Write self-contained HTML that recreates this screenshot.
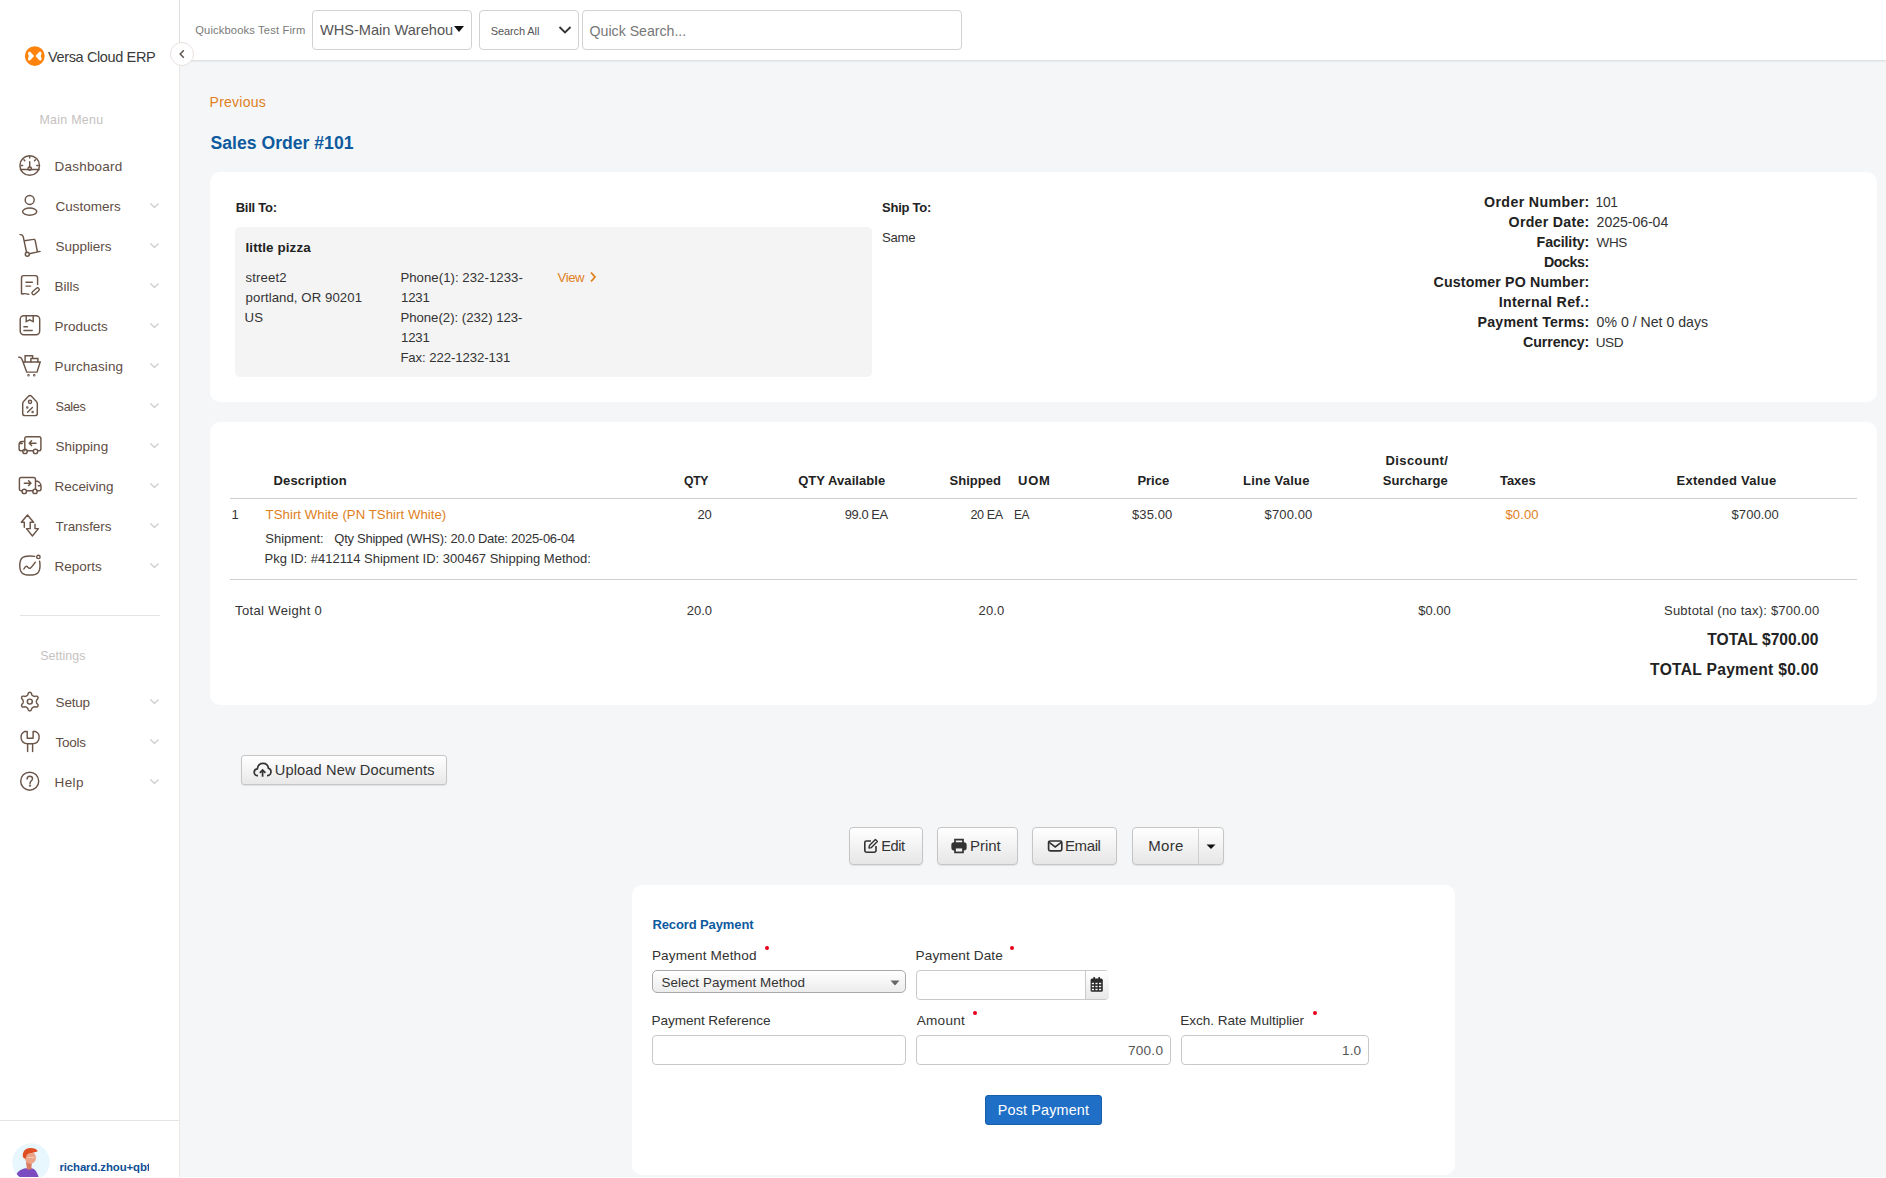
<!DOCTYPE html>
<html><head><meta charset="utf-8"><title>Sales Order #101</title>
<style>
html,body{margin:0;padding:0;width:1886px;height:1178px;overflow:hidden;background:#f5f6f8;}
body{position:relative;font-family:"Liberation Sans", sans-serif;}
.t{position:absolute;white-space:nowrap;}
.r{position:absolute;}
</style></head><body>
<div class="r" style="left:0px;top:0px;width:1886px;height:1178px;background:#f5f6f8;"></div>
<div class="r" style="left:0px;top:0px;width:179px;height:1178px;background:#fff;"></div>
<div class="r" style="left:179px;top:0px;width:1px;height:1178px;background:#ebe7e4;"></div>
<div class="r" style="left:180px;top:0px;width:1706px;height:60px;background:#fff;box-shadow:0 1px 2px rgba(0,0,0,0.12);"></div>
<svg class="r" style="left:24px;top:45.8px" width="22" height="21" viewBox="0 0 22 21">
<circle cx="10.8" cy="10.1" r="9.9" fill="#ff820a"/>
<path d="M4 7.3 C4 5.9 5.5 5.2 6.5 6.1 L10.1 10.1 L6.5 14.1 C5.5 15 4 14.3 4 12.9 C4 12 4.7 11.4 4.7 10.1 C4.7 8.8 4 8.2 4 7.3 Z" fill="#fff"/>
<path d="M17.6 7.3 C17.6 5.9 16.1 5.2 15.1 6.1 L11.5 10.1 L15.1 14.1 C16.1 15 17.6 14.3 17.6 12.9 C17.6 12 16.9 11.4 16.9 10.1 C16.9 8.8 17.6 8.2 17.6 7.3 Z" fill="#fff"/>
</svg>
<div class="t" style="left:48.00px;top:48px;font-size:14.5px;line-height:18px;color:#3a3a3a;letter-spacing:-0.369px;">Versa Cloud ERP</div>
<div class="r" style="left:170px;top:42px;width:22px;height:22px;border:1px solid #e8e1dd;border-radius:50%;background:#fff;"></div>
<svg class="r" style="left:176px;top:48px" width="12" height="12" viewBox="0 0 12 12"><path d="M7.8 2.2 L4.2 6 L7.8 9.8" fill="none" stroke="#5b504a" stroke-width="1.4"/></svg>
<div class="t" style="left:39.50px;top:112px;font-size:12.4px;line-height:16px;color:#c6c2bf;letter-spacing:0.287px;">Main Menu</div>
<svg class="r" style="left:18px;top:154px" width="24" height="24" viewBox="0 0 24 24" fill="none" stroke="#6b5548" stroke-width="1.45" stroke-linecap="round"><circle cx="11.7" cy="11.5" r="9.8"/><path d="M2.4 15.5 H21"/><circle cx="11.7" cy="14.6" r="1.7"/><path d="M11.7 12.9 V7.6 M11.7 2.6 V4 M3.2 11.5 H4.6 M20.2 11.5 H18.8 M5.9 5.8 L6.8 6.7 M17.5 5.8 L16.6 6.7"/></svg>
<div class="t" style="left:54.60px;top:158px;font-size:13.5px;line-height:17px;color:#5e4d44;letter-spacing:0.196px;">Dashboard</div>
<svg class="r" style="left:18px;top:194px" width="24" height="24" viewBox="0 0 24 24" fill="none" stroke="#6b5548" stroke-width="1.45" stroke-linecap="round"><circle cx="11.7" cy="5.9" r="4.5"/><ellipse cx="11.7" cy="17.6" rx="7.1" ry="3.6"/></svg>
<div class="t" style="left:55.60px;top:198px;font-size:13.5px;line-height:17px;color:#5e4d44;letter-spacing:-0.002px;">Customers</div>
<svg class="r" style="left:148px;top:200px" width="14" height="10" viewBox="0 0 14 10"><path d="M2.5 3.5 L6.5 7.5 L10.5 3.5" fill="none" stroke="#ccc8c5" stroke-width="1.1"/></svg>
<svg class="r" style="left:18px;top:234px" width="24" height="24" viewBox="0 0 24 24" fill="none" stroke="#6b5548" stroke-width="1.45" stroke-linecap="round"><path d="M2 0.6 C3.6 0.6 4.8 1.2 5.2 2.6 L8.6 18.6 M6.5 6.7 L15.4 5.4 C16.4 5.2 17 5.8 17.2 6.6 L19.4 17.6 M11.4 19.8 L22 17.4"/><circle cx="9.3" cy="20.3" r="2"/></svg>
<div class="t" style="left:55.60px;top:238px;font-size:13.5px;line-height:17px;color:#5e4d44;letter-spacing:-0.054px;">Suppliers</div>
<svg class="r" style="left:148px;top:240px" width="14" height="10" viewBox="0 0 14 10"><path d="M2.5 3.5 L6.5 7.5 L10.5 3.5" fill="none" stroke="#ccc8c5" stroke-width="1.1"/></svg>
<svg class="r" style="left:18px;top:274px" width="24" height="24" viewBox="0 0 24 24" fill="none" stroke="#6b5548" stroke-width="1.45" stroke-linecap="round"><path d="M19.6 10.6 V4 C19.6 2.6 18.8 1.6 17.4 1.6 H5.6 C4.2 1.6 3.5 2.6 3.5 4 V19.6 C4.4 20.4 5.4 19.6 6.6 19.6 C8.2 19.6 9.2 20.4 10.8 20.2"/><path d="M8 8.3 H14.4 M8 12.1 H12.6"/><rect x="13.3" y="15.6" width="8.6" height="3.3" rx="1.65" transform="rotate(-42 17.6 17.25)"/></svg>
<div class="t" style="left:54.60px;top:278px;font-size:13.5px;line-height:17px;color:#5e4d44;">Bills</div>
<svg class="r" style="left:148px;top:280px" width="14" height="10" viewBox="0 0 14 10"><path d="M2.5 3.5 L6.5 7.5 L10.5 3.5" fill="none" stroke="#ccc8c5" stroke-width="1.1"/></svg>
<svg class="r" style="left:18px;top:314px" width="24" height="24" viewBox="0 0 24 24" fill="none" stroke="#6b5548" stroke-width="1.45" stroke-linecap="round"><rect x="2.2" y="1.7" width="19.5" height="19" rx="3.6"/><path d="M8.2 1.7 V7.6 L11.7 5.8 L15.2 7.6 V1.7"/><path d="M5.9 12.8 H9.4 M5.9 16.4 H14.2"/></svg>
<div class="t" style="left:54.60px;top:318px;font-size:13.5px;line-height:17px;color:#5e4d44;">Products</div>
<svg class="r" style="left:148px;top:320px" width="14" height="10" viewBox="0 0 14 10"><path d="M2.5 3.5 L6.5 7.5 L10.5 3.5" fill="none" stroke="#ccc8c5" stroke-width="1.1"/></svg>
<svg class="r" style="left:18px;top:354px" width="24" height="24" viewBox="0 0 24 24" fill="none" stroke="#6b5548" stroke-width="1.45" stroke-linecap="round"><path d="M0.8 3.2 C2 3 3.2 3.6 3.8 5 L5 7.9 H22.2 L19 18.1 H8.7 L5 7.9"/><path d="M7.1 7.9 V1.7 H14.6 V4.4 H19.9 V7.9 M14.6 4.4 H12.9 V7.9"/><circle cx="10.5" cy="21.3" r=".45" stroke-width="1.6"/><circle cx="16.2" cy="21.3" r=".45" stroke-width="1.6"/></svg>
<div class="t" style="left:54.60px;top:358px;font-size:13.5px;line-height:17px;color:#5e4d44;letter-spacing:0.097px;">Purchasing</div>
<svg class="r" style="left:148px;top:360px" width="14" height="10" viewBox="0 0 14 10"><path d="M2.5 3.5 L6.5 7.5 L10.5 3.5" fill="none" stroke="#ccc8c5" stroke-width="1.1"/></svg>
<svg class="r" style="left:18px;top:394px" width="24" height="24" viewBox="0 0 24 24" fill="none" stroke="#6b5548" stroke-width="1.45" stroke-linecap="round"><path d="M10.5 2.2 C11.3 1.3 12.7 1.3 13.5 2.2 L18.4 7.4 C19 8 19.3 8.7 19.3 9.6 V19.4 C19.3 20.8 18.4 21.6 17 21.6 H7 C5.6 21.6 4.7 20.8 4.7 19.4 V9.6 C4.7 8.7 5 8 5.6 7.4 Z"/><circle cx="12" cy="7.8" r="1.6"/><path d="M14.4 13.4 L9.6 18.2"/><circle cx="9.3" cy="13.4" r=".5" stroke-width="1.5"/><circle cx="14.6" cy="18" r=".5" stroke-width="1.5"/></svg>
<div class="t" style="left:55.60px;top:399px;font-size:12.7px;line-height:16px;color:#5e4d44;letter-spacing:-0.400px;">Sales</div>
<svg class="r" style="left:148px;top:400px" width="14" height="10" viewBox="0 0 14 10"><path d="M2.5 3.5 L6.5 7.5 L10.5 3.5" fill="none" stroke="#ccc8c5" stroke-width="1.1"/></svg>
<svg class="r" style="left:18px;top:434px" width="24" height="24" viewBox="0 0 24 24" fill="none" stroke="#6b5548" stroke-width="1.45" stroke-linecap="round"><path d="M6.8 16.8 V4.6 C6.8 3.4 7.5 2.8 8.7 2.8 H21 C22.2 2.8 22.9 3.4 22.9 4.6 V15 C22.9 16.2 22.2 16.8 21 16.8 H19.7 M15.3 16.8 H9.2 M6.8 7.4 H4.2 C2.4 7.4 1.1 8.8 1.1 10.6 V15 C1.1 16.2 1.8 16.8 3 16.8 H4.8 M1.3 9.4 H4.2"/><circle cx="7" cy="17.4" r="2.2"/><circle cx="17.5" cy="17.4" r="2.2"/><path d="M11.2 9.2 H18 M11.2 9.2 L13.6 6.8 M11.2 9.2 L13.6 11.6"/></svg>
<div class="t" style="left:55.60px;top:438px;font-size:13.5px;line-height:17px;color:#5e4d44;">Shipping</div>
<svg class="r" style="left:148px;top:440px" width="14" height="10" viewBox="0 0 14 10"><path d="M2.5 3.5 L6.5 7.5 L10.5 3.5" fill="none" stroke="#ccc8c5" stroke-width="1.1"/></svg>
<svg class="r" style="left:18px;top:474px" width="24" height="24" viewBox="0 0 24 24" fill="none" stroke="#6b5548" stroke-width="1.45" stroke-linecap="round"><path d="M1.4 15 V5.2 C1.4 4 2.1 3.4 3.3 3.4 H15.6 C16.8 3.4 17.5 4 17.5 5.2 V15 M8.5 16.8 H15 M17.5 7.3 H19.4 C21.4 7.8 23 10.2 23 12.4 V15 C23 16.2 22.4 16.8 21.2 16.8 H19.2 M20.4 11.8 H23 M4.1 16.8 H3.2 C2 16.8 1.4 16.2 1.4 15"/><circle cx="6.3" cy="17.4" r="2.2"/><circle cx="17" cy="17.4" r="2.2"/><path d="M6.3 9.2 H13 M13 9.2 L10.6 6.8 M13 9.2 L10.6 11.6"/></svg>
<div class="t" style="left:54.60px;top:478px;font-size:13.5px;line-height:17px;color:#5e4d44;letter-spacing:-0.059px;">Receiving</div>
<svg class="r" style="left:148px;top:480px" width="14" height="10" viewBox="0 0 14 10"><path d="M2.5 3.5 L6.5 7.5 L10.5 3.5" fill="none" stroke="#ccc8c5" stroke-width="1.1"/></svg>
<svg class="r" style="left:18px;top:514px" width="24" height="24" viewBox="0 0 24 24" fill="none" stroke="#6b5548" stroke-width="1.45" stroke-linecap="round"><path d="M6.3 13.2 V8.3 H3.3 L9.5 1 L15.6 8.3 H12.2 V14.6" stroke-linejoin="round"/><path d="M17 10.2 V14.6 H20.4 L14.4 22 L8.5 14.6 H12.2" stroke-linejoin="round"/></svg>
<div class="t" style="left:55.60px;top:518px;font-size:13.5px;line-height:17px;color:#5e4d44;letter-spacing:-0.083px;">Transfers</div>
<svg class="r" style="left:148px;top:520px" width="14" height="10" viewBox="0 0 14 10"><path d="M2.5 3.5 L6.5 7.5 L10.5 3.5" fill="none" stroke="#ccc8c5" stroke-width="1.1"/></svg>
<svg class="r" style="left:18px;top:554px" width="24" height="24" viewBox="0 0 24 24" fill="none" stroke="#6b5548" stroke-width="1.45" stroke-linecap="round"><path d="M16.6 2.4 C15.2 2.1 13.6 2 11.9 2 C4.4 2 1.8 4.4 1.8 11.5 C1.8 18.6 4.4 21 11.9 21 C19.4 21 22 18.6 22 11.5 C22 9.8 21.9 8.4 21.6 7.2"/><circle cx="20.4" cy="2.9" r="1.7"/><path d="M5.9 15 C7.4 11.8 8.6 11.6 10 13.4 C11.4 15.2 12.6 15 17.3 8.2"/></svg>
<div class="t" style="left:54.60px;top:558px;font-size:13.5px;line-height:17px;color:#5e4d44;">Reports</div>
<svg class="r" style="left:148px;top:560px" width="14" height="10" viewBox="0 0 14 10"><path d="M2.5 3.5 L6.5 7.5 L10.5 3.5" fill="none" stroke="#ccc8c5" stroke-width="1.1"/></svg>
<div class="r" style="left:20px;top:615px;width:140px;height:1px;background:#e6e2df;"></div>
<div class="t" style="left:40.20px;top:648px;font-size:12.4px;line-height:16px;color:#c6c2bf;letter-spacing:0.061px;">Settings</div>
<svg class="r" style="left:18px;top:690px" width="24" height="24" viewBox="0 0 24 24" fill="none" stroke="#6b5548" stroke-width="1.45" stroke-linecap="round"><path d="M18.40 11.60 L18.41 11.89 L18.44 12.18 L18.49 12.48 L18.56 12.79 L18.66 13.12 L18.85 13.49 L19.50 14.03 L19.82 14.52 L19.99 14.99 L20.06 15.45 L20.01 15.87 L19.85 16.25 L19.60 16.57 L19.26 16.82 L18.84 17.00 L18.34 17.08 L17.75 17.06 L16.96 16.76 L16.55 16.78 L16.22 16.86 L15.91 16.96 L15.62 17.06 L15.36 17.18 L15.10 17.32 L14.86 17.47 L14.62 17.64 L14.38 17.84 L14.15 18.05 L13.91 18.30 L13.69 18.65 L13.55 19.49 L13.28 20.00 L12.96 20.39 L12.59 20.67 L12.20 20.84 L11.80 20.90 L11.40 20.84 L11.01 20.67 L10.64 20.39 L10.32 20.00 L10.05 19.49 L9.91 18.65 L9.69 18.30 L9.45 18.05 L9.22 17.84 L8.98 17.64 L8.74 17.47 L8.50 17.32 L8.24 17.18 L7.98 17.06 L7.69 16.96 L7.38 16.86 L7.05 16.78 L6.64 16.76 L5.85 17.06 L5.26 17.08 L4.76 17.00 L4.34 16.82 L4.00 16.57 L3.75 16.25 L3.59 15.87 L3.54 15.45 L3.61 14.99 L3.78 14.52 L4.10 14.03 L4.75 13.49 L4.94 13.12 L5.04 12.79 L5.11 12.48 L5.16 12.18 L5.19 11.89 L5.20 11.60 L5.19 11.31 L5.16 11.02 L5.11 10.72 L5.04 10.41 L4.94 10.08 L4.75 9.71 L4.10 9.17 L3.78 8.68 L3.61 8.21 L3.54 7.75 L3.59 7.33 L3.75 6.95 L4.00 6.63 L4.34 6.38 L4.76 6.20 L5.26 6.12 L5.85 6.14 L6.64 6.44 L7.05 6.42 L7.38 6.34 L7.69 6.24 L7.98 6.14 L8.24 6.02 L8.50 5.88 L8.74 5.73 L8.98 5.56 L9.22 5.36 L9.45 5.15 L9.69 4.90 L9.91 4.55 L10.05 3.71 L10.32 3.20 L10.64 2.81 L11.01 2.53 L11.40 2.36 L11.80 2.30 L12.20 2.36 L12.59 2.53 L12.96 2.81 L13.28 3.20 L13.55 3.71 L13.69 4.55 L13.91 4.90 L14.15 5.15 L14.38 5.36 L14.62 5.56 L14.86 5.73 L15.10 5.88 L15.36 6.02 L15.62 6.14 L15.91 6.24 L16.22 6.34 L16.55 6.42 L16.96 6.44 L17.75 6.14 L18.34 6.12 L18.84 6.20 L19.26 6.38 L19.60 6.63 L19.85 6.95 L20.01 7.33 L20.06 7.75 L19.99 8.21 L19.82 8.68 L19.50 9.17 L18.85 9.71 L18.66 10.08 L18.56 10.41 L18.49 10.72 L18.44 11.02 L18.41 11.31 L18.40 11.60Z" stroke-linejoin="round"/><circle cx="11.8" cy="11.6" r="2.5"/></svg>
<div class="t" style="left:55.60px;top:694px;font-size:13.5px;line-height:17px;color:#5e4d44;letter-spacing:-0.193px;">Setup</div>
<svg class="r" style="left:148px;top:696px" width="14" height="10" viewBox="0 0 14 10"><path d="M2.5 3.5 L6.5 7.5 L10.5 3.5" fill="none" stroke="#ccc8c5" stroke-width="1.1"/></svg>
<svg class="r" style="left:18px;top:730px" width="24" height="24" viewBox="0 0 24 24" fill="none" stroke="#6b5548" stroke-width="1.45" stroke-linecap="round"><path d="M9.2 1.4 V8.2 H15.1 V1.4 M9.2 1.4 H6.8 C4 2.8 2.6 5.6 3.2 8.6 C3.8 11.6 6.4 13.6 9.6 13.8 V21.6 M15.1 1.4 H17.4 C20.2 2.8 21.6 5.6 21 8.6 C20.4 11.6 17.8 13.6 14.6 13.8 V21.6 M9.6 13.8 H14.6" stroke-linejoin="round"/></svg>
<div class="t" style="left:55.60px;top:734px;font-size:13.5px;line-height:17px;color:#5e4d44;letter-spacing:-0.291px;">Tools</div>
<svg class="r" style="left:148px;top:736px" width="14" height="10" viewBox="0 0 14 10"><path d="M2.5 3.5 L6.5 7.5 L10.5 3.5" fill="none" stroke="#ccc8c5" stroke-width="1.1"/></svg>
<svg class="r" style="left:18px;top:770px" width="24" height="24" viewBox="0 0 24 24" fill="none" stroke="#6b5548" stroke-width="1.45" stroke-linecap="round"><circle cx="11.7" cy="11.2" r="9"/><path d="M9.1 9 C9.1 7.3 10.2 6.2 11.8 6.2 C13.4 6.2 14.5 7.3 14.5 8.7 C14.5 10.7 12 10.9 12 13.4"/><circle cx="12" cy="15.6" r=".45" stroke-width="1.5"/></svg>
<div class="t" style="left:54.60px;top:774px;font-size:13.5px;line-height:17px;color:#5e4d44;letter-spacing:0.348px;">Help</div>
<svg class="r" style="left:148px;top:776px" width="14" height="10" viewBox="0 0 14 10"><path d="M2.5 3.5 L6.5 7.5 L10.5 3.5" fill="none" stroke="#ccc8c5" stroke-width="1.1"/></svg>
<div class="r" style="left:0px;top:1120px;width:179px;height:1px;background:#e6e2df;"></div>
<svg class="r" style="left:12px;top:1143px" width="38" height="35" viewBox="0 0 38 35">
<defs><clipPath id="av"><circle cx="19" cy="19" r="18.8"/></clipPath></defs>
<g clip-path="url(#av)">
<circle cx="19" cy="19" r="19" fill="#e8f7fd"/>
<path d="M3 36 C4 29 8.5 25.8 14 25.2 L20 25.2 C23 26 25.5 29 27 36 Z" fill="#7b4cc0"/>
<path d="M14 19 L19.8 19 L19.4 26.4 L15 26.4 Z" fill="#d97c62"/>
<ellipse cx="18.4" cy="14.8" rx="5.6" ry="6.1" fill="#eca386"/>
<path d="M15.5 14.4 H22.5" stroke="#f6d9cc" stroke-width="0.8"/>
<path d="M10.8 13.6 C10.4 8.4 13 5 18 4.9 C22 4.8 25 6 25.8 8.2 C23.2 9.4 20 9.8 17.2 10.2 C15.4 10.6 14.4 12.2 13.8 15.2 L12 15.4 Z" fill="#dd4e22"/>
</g></svg>
<div class="t" style="left:59.40px;top:1160px;font-size:11.4px;line-height:14px;color:#0f4f96;font-weight:700;letter-spacing:-0.101px;width:89.8px;overflow:hidden;">richard.zhou+qbt</div>
<div class="t" style="left:195.20px;top:23px;font-size:11.2px;line-height:14px;color:#7a7a7a;letter-spacing:0.141px;">Quickbooks Test Firm</div>
<div class="r" style="left:312px;top:10px;width:160px;height:40px;background:#fff;border:1px solid #d2d2d2;border-radius:4px;box-sizing:border-box;"></div>
<div class="t" style="left:319.90px;top:21px;font-size:14.6px;line-height:18px;color:#555;width:133.5px;overflow:hidden;">WHS-Main Warehouse</div>
<svg class="r" style="left:453px;top:25px" width="12" height="8" viewBox="0 0 12 8"><path d="M1 1 H11 L6 7 Z" fill="#111"/></svg>
<div class="r" style="left:479px;top:10px;width:100px;height:40px;background:#fff;border:1px solid #d2d2d2;border-radius:4px;box-sizing:border-box;"></div>
<div class="t" style="left:490.70px;top:24px;font-size:11px;line-height:14px;color:#555;letter-spacing:-0.099px;">Search All</div>
<svg class="r" style="left:558px;top:24px" width="14" height="12" viewBox="0 0 14 12"><path d="M1.5 3 L7 8.5 L12.5 3" fill="none" stroke="#333" stroke-width="1.8"/></svg>
<div class="r" style="left:582px;top:10px;width:380px;height:40px;background:#fff;border:1px solid #d2d2d2;border-radius:4px;box-sizing:border-box;"></div>
<div class="t" style="left:589.60px;top:22px;font-size:14.2px;line-height:18px;color:#777;letter-spacing:-0.025px;">Quick Search...</div>
<div class="t" style="left:209.60px;top:93px;font-size:14px;line-height:18px;color:#e0801b;letter-spacing:0.247px;">Previous</div>
<div class="t" style="left:210.60px;top:132px;font-size:17.6px;line-height:22px;color:#0d5a9e;font-weight:700;letter-spacing:0.005px;">Sales Order #101</div>
<div class="r" style="left:210px;top:172px;width:1667px;height:230px;background:#fff;border-radius:10px;"></div>
<div class="t" style="left:235.70px;top:200px;font-size:13px;line-height:16px;color:#222;font-weight:700;letter-spacing:-0.250px;">Bill To:</div>
<div class="r" style="left:235px;top:227px;width:637px;height:150px;background:#f4f4f4;border-radius:5px;"></div>
<div class="t" style="left:245.50px;top:239px;font-size:13.4px;line-height:17px;color:#222;font-weight:700;letter-spacing:0.106px;">little pizza</div>
<div class="t" style="left:245.60px;top:270px;font-size:13.2px;line-height:16px;color:#333;letter-spacing:0.120px;">street2</div>
<div class="t" style="left:245.60px;top:290px;font-size:13.2px;line-height:16px;color:#333;letter-spacing:0.078px;">portland, OR 90201</div>
<div class="t" style="left:244.60px;top:310px;font-size:13.2px;line-height:16px;color:#333;letter-spacing:0.120px;">US</div>
<div class="t" style="left:400.40px;top:270px;font-size:13.2px;line-height:16px;color:#333;letter-spacing:0.038px;">Phone(1): 232-1233-</div>
<div class="t" style="left:401.00px;top:290px;font-size:13.2px;line-height:16px;color:#333;letter-spacing:-0.201px;">1231</div>
<div class="t" style="left:400.40px;top:310px;font-size:13.2px;line-height:16px;color:#333;letter-spacing:-0.017px;">Phone(2): (232) 123-</div>
<div class="t" style="left:401.00px;top:330px;font-size:13.2px;line-height:16px;color:#333;letter-spacing:-0.201px;">1231</div>
<div class="t" style="left:400.40px;top:350px;font-size:13.2px;line-height:16px;color:#333;letter-spacing:-0.100px;">Fax: 222-1232-131</div>
<div class="t" style="left:557.50px;top:270px;font-size:13.2px;line-height:16px;color:#e0801b;letter-spacing:-0.400px;">View</div>
<svg class="r" style="left:588px;top:270px" width="10" height="14" viewBox="0 0 10 14"><path d="M3 2.5 L7 7 L3 11.5" fill="none" stroke="#e0801b" stroke-width="1.8"/></svg>
<div class="t" style="left:882.10px;top:200px;font-size:13px;line-height:16px;color:#222;font-weight:700;letter-spacing:-0.256px;">Ship To:</div>
<div class="t" style="left:882.00px;top:230px;font-size:13.2px;line-height:16px;color:#333;letter-spacing:-0.305px;">Same</div>
<div class="t" style="left:1484.10px;top:193px;font-size:14.2px;line-height:18px;color:#222;font-weight:700;letter-spacing:0.360px;">Order Number:</div>
<div class="t" style="left:1595.62px;top:194px;font-size:13.8px;line-height:17px;color:#333;letter-spacing:-0.400px;">101</div>
<div class="t" style="left:1508.60px;top:213px;font-size:14.2px;line-height:18px;color:#222;font-weight:700;letter-spacing:0.267px;">Order Date:</div>
<div class="t" style="left:1596.60px;top:213px;font-size:14.1px;line-height:18px;color:#333;letter-spacing:-0.051px;">2025-06-04</div>
<div class="t" style="left:1536.60px;top:233px;font-size:14.2px;line-height:18px;color:#222;font-weight:700;letter-spacing:-0.111px;">Facility:</div>
<div class="t" style="left:1596.60px;top:234px;font-size:13.5px;line-height:17px;color:#333;letter-spacing:-0.400px;">WHS</div>
<div class="t" style="left:1544.00px;top:253px;font-size:14.2px;line-height:18px;color:#222;font-weight:700;letter-spacing:-0.397px;">Docks:</div>
<div class="t" style="left:1433.50px;top:273px;font-size:14.2px;line-height:18px;color:#222;font-weight:700;letter-spacing:0.161px;">Customer PO Number:</div>
<div class="t" style="left:1498.70px;top:293px;font-size:14.2px;line-height:18px;color:#222;font-weight:700;letter-spacing:0.301px;">Internal Ref.:</div>
<div class="t" style="left:1477.60px;top:313px;font-size:14.2px;line-height:18px;color:#222;font-weight:700;letter-spacing:0.184px;">Payment Terms:</div>
<div class="t" style="left:1596.60px;top:313px;font-size:14.1px;line-height:18px;color:#333;letter-spacing:0.013px;">0% 0 / Net 0 days</div>
<div class="t" style="left:1523.10px;top:333px;font-size:14.2px;line-height:18px;color:#222;font-weight:700;letter-spacing:-0.099px;">Currency:</div>
<div class="t" style="left:1595.64px;top:334px;font-size:13.6px;line-height:17px;color:#333;letter-spacing:-0.400px;">USD</div>
<div class="r" style="left:210px;top:422px;width:1667px;height:283px;background:#fff;border-radius:10px;"></div>
<div class="t" style="left:273.50px;top:473px;font-size:13px;line-height:16px;color:#222;font-weight:700;letter-spacing:0.163px;">Description</div>
<div class="t" style="left:684.10px;top:474px;font-size:12.2px;line-height:15px;color:#222;font-weight:700;letter-spacing:-0.400px;">QTY</div>
<div class="t" style="left:798.20px;top:473px;font-size:13px;line-height:16px;color:#222;font-weight:700;letter-spacing:0.066px;">QTY Available</div>
<div class="t" style="left:949.60px;top:473px;font-size:13px;line-height:16px;color:#222;font-weight:700;letter-spacing:-0.006px;">Shipped</div>
<div class="t" style="left:1018.00px;top:473px;font-size:13px;line-height:16px;color:#222;font-weight:700;letter-spacing:0.750px;">UOM</div>
<div class="t" style="left:1137.40px;top:473px;font-size:13px;line-height:16px;color:#222;font-weight:700;letter-spacing:-0.018px;">Price</div>
<div class="t" style="left:1243.10px;top:473px;font-size:13px;line-height:16px;color:#222;font-weight:700;letter-spacing:0.225px;">Line Value</div>
<div class="t" style="left:1385.60px;top:453px;font-size:13px;line-height:16px;color:#222;font-weight:700;letter-spacing:0.386px;">Discount/</div>
<div class="t" style="left:1382.70px;top:473px;font-size:13px;line-height:16px;color:#222;font-weight:700;letter-spacing:0.104px;">Surcharge</div>
<div class="t" style="left:1500.10px;top:473px;font-size:13px;line-height:16px;color:#222;font-weight:700;letter-spacing:-0.092px;">Taxes</div>
<div class="t" style="left:1676.50px;top:473px;font-size:13px;line-height:16px;color:#222;font-weight:700;letter-spacing:0.272px;">Extended Value</div>
<div class="r" style="left:230px;top:498px;width:1627px;height:1px;background:#cfcfcf;"></div>
<div class="t" style="left:231.50px;top:507px;font-size:13px;line-height:16px;color:#333;">1</div>
<div class="t" style="left:265.60px;top:507px;font-size:13.2px;line-height:16px;color:#e0801b;letter-spacing:0.047px;">TShirt White (PN TShirt White)</div>
<div class="t" style="left:697.50px;top:507px;font-size:13px;line-height:16px;color:#333;letter-spacing:-0.330px;">20</div>
<div class="t" style="left:844.70px;top:507px;font-size:12.9px;line-height:16px;color:#333;letter-spacing:-0.400px;">99.0 EA</div>
<div class="t" style="left:970.50px;top:507px;font-size:12.6px;line-height:16px;color:#333;letter-spacing:-0.400px;">20 EA</div>
<div class="t" style="left:1013.98px;top:508px;font-size:11.9px;line-height:15px;color:#333;letter-spacing:-0.400px;">EA</div>
<div class="t" style="left:1132.00px;top:507px;font-size:13px;line-height:16px;color:#333;letter-spacing:0.094px;">$35.00</div>
<div class="t" style="left:1264.60px;top:507px;font-size:13px;line-height:16px;color:#333;letter-spacing:0.123px;">$700.00</div>
<div class="t" style="left:1505.40px;top:507px;font-size:13px;line-height:16px;color:#e0801b;letter-spacing:0.150px;">$0.00</div>
<div class="t" style="left:1731.60px;top:507px;font-size:13px;line-height:16px;color:#333;letter-spacing:0.040px;">$700.00</div>
<div class="t" style="left:265.30px;top:531px;font-size:13px;line-height:16px;color:#333;letter-spacing:-0.015px;">Shipment:</div>
<div class="t" style="left:334.30px;top:531px;font-size:13px;line-height:16px;color:#333;letter-spacing:-0.275px;">Qty Shipped (WHS): 20.0 Date: 2025-06-04</div>
<div class="t" style="left:264.60px;top:551px;font-size:13px;line-height:16px;color:#333;letter-spacing:-0.004px;">Pkg ID: #412114 Shipment ID: 300467 Shipping Method:</div>
<div class="r" style="left:230px;top:579px;width:1627px;height:1px;background:#cfcfcf;"></div>
<div class="t" style="left:235.10px;top:603px;font-size:13px;line-height:16px;color:#333;letter-spacing:0.353px;">Total Weight 0</div>
<div class="t" style="left:686.70px;top:603px;font-size:13px;line-height:16px;color:#333;letter-spacing:0.009px;">20.0</div>
<div class="t" style="left:978.60px;top:603px;font-size:13px;line-height:16px;color:#333;letter-spacing:0.109px;">20.0</div>
<div class="t" style="left:1418.20px;top:603px;font-size:13px;line-height:16px;color:#333;letter-spacing:0.025px;">$0.00</div>
<div class="t" style="left:1664.00px;top:603px;font-size:13px;line-height:16px;color:#333;letter-spacing:0.225px;">Subtotal (no tax): $700.00</div>
<div class="t" style="left:1707.30px;top:630px;font-size:15.6px;line-height:20px;color:#222;font-weight:700;letter-spacing:0.012px;">TOTAL $700.00</div>
<div class="t" style="left:1650.10px;top:660px;font-size:15.6px;line-height:20px;color:#222;font-weight:700;letter-spacing:0.298px;">TOTAL Payment $0.00</div>
<div class="r" style="left:241px;top:755px;width:206px;height:30px;background:linear-gradient(#fff,#e8e8e8);border:1px solid #c5c5c5;border-radius:3px;box-sizing:border-box;box-shadow:0 1px 1px rgba(0,0,0,.08);"></div>
<svg class="r" style="left:253px;top:762px" width="19" height="16" viewBox="0 0 19 16"><path d="M5 13.6 H4.6 C2.6 13.6 1.2 12.2 1.2 10.2 C1.2 8.2 2.6 7 4.4 6.8 C4.8 3.6 7 1.4 10 1.4 C13 1.4 15 3.4 15.4 6.2 C17 6.6 18 8 18 9.8 C18 11.8 16.6 13.6 14.4 13.6 H14" fill="none" stroke="#333" stroke-width="1.7"/><path d="M9.6 14.8 V8.4 M6.8 10.8 L9.6 8 L12.4 10.8" fill="none" stroke="#333" stroke-width="1.7"/></svg>
<div class="t" style="left:274.80px;top:761px;font-size:14.6px;line-height:18px;color:#333;letter-spacing:0.128px;">Upload New Documents</div>
<div class="r" style="left:848.5px;top:827px;width:74.0px;height:38px;background:linear-gradient(#fff,#e6e6e6);border:1px solid #c5c5c5;border-radius:4px;box-sizing:border-box;box-shadow:0 1px 1px rgba(0,0,0,.08);"></div>
<div class="r" style="left:937px;top:827px;width:80.5px;height:38px;background:linear-gradient(#fff,#e6e6e6);border:1px solid #c5c5c5;border-radius:4px;box-sizing:border-box;box-shadow:0 1px 1px rgba(0,0,0,.08);"></div>
<div class="r" style="left:1032px;top:827px;width:84.5px;height:38px;background:linear-gradient(#fff,#e6e6e6);border:1px solid #c5c5c5;border-radius:4px;box-sizing:border-box;box-shadow:0 1px 1px rgba(0,0,0,.08);"></div>
<div class="r" style="left:1132px;top:827px;width:91.5px;height:38px;background:linear-gradient(#fff,#e6e6e6);border:1px solid #c5c5c5;border-radius:4px;box-sizing:border-box;box-shadow:0 1px 1px rgba(0,0,0,.08);"></div>
<div class="r" style="left:1198px;top:829px;width:1px;height:35px;background:#cfcfcf;"></div>
<svg class="r" style="left:863px;top:838px" width="16" height="16" viewBox="0 0 16 16"><path d="M8 3 H3.4 C2.4 3 1.8 3.6 1.8 4.6 V12.6 C1.8 13.6 2.4 14.2 3.4 14.2 H11.4 C12.4 14.2 13 13.6 13 12.6 V8" fill="none" stroke="#333" stroke-width="1.6"/><path d="M6 10 L6.4 7.6 L12.4 1.6 L14.4 3.6 L8.4 9.6 Z" fill="none" stroke="#333" stroke-width="1.4" stroke-linejoin="round"/></svg>
<div class="t" style="left:881.23px;top:837px;font-size:14.6px;line-height:18px;color:#333;letter-spacing:-0.400px;">Edit</div>
<svg class="r" style="left:951px;top:838px" width="16" height="16" viewBox="0 0 16 16"><path d="M4 5.2 V1.6 H12 V5.2" fill="none" stroke="#333" stroke-width="1.7"/><rect x="1.2" y="5.2" width="13.6" height="6.4" rx="1.8" fill="#333" stroke="#333" stroke-width="1.7"/><rect x="4" y="9.6" width="8" height="4.8" fill="#f2f2f2" stroke="#333" stroke-width="1.7"/></svg>
<div class="t" style="left:970.00px;top:836px;font-size:15px;line-height:19px;color:#333;letter-spacing:-0.044px;">Print</div>
<svg class="r" style="left:1047px;top:839px" width="16" height="14" viewBox="0 0 16 14"><rect x="1.6" y="2" width="13.2" height="9.8" rx="1.6" fill="none" stroke="#333" stroke-width="1.7"/><path d="M2.2 3.4 L8.2 8 L14.2 3.4" fill="none" stroke="#333" stroke-width="1.6"/></svg>
<div class="t" style="left:1065.00px;top:836px;font-size:15.0px;line-height:19px;color:#333;letter-spacing:-0.400px;">Email</div>
<div class="t" style="left:1148.30px;top:836px;font-size:15px;line-height:19px;color:#333;letter-spacing:0.256px;">More</div>
<svg class="r" style="left:1206px;top:843.5px" width="10" height="6" viewBox="0 0 10 6"><path d="M0.5 0.5 H9.5 L5 5 Z" fill="#111"/></svg>
<div class="r" style="left:632px;top:885px;width:823px;height:290px;background:#fff;border-radius:10px;"></div>
<div class="t" style="left:652.40px;top:917px;font-size:13px;line-height:16px;color:#0d5a9e;font-weight:700;letter-spacing:-0.105px;">Record Payment</div>
<div class="t" style="left:651.90px;top:947px;font-size:13.6px;line-height:17px;color:#333;letter-spacing:0.146px;">Payment Method</div>
<div class="r" style="left:764.7px;top:946px;width:4.0px;height:4px;background:#e8001c;border-radius:50%;"></div>
<div class="t" style="left:915.60px;top:947px;font-size:13.6px;line-height:17px;color:#333;letter-spacing:0.093px;">Payment Date</div>
<div class="r" style="left:1010px;top:946px;width:4px;height:4px;background:#e8001c;border-radius:50%;"></div>
<div class="r" style="left:652px;top:970px;width:254px;height:23px;background:linear-gradient(#fff,#ececec);border:1px solid #aaa;border-radius:5px;box-sizing:border-box;"></div>
<div class="t" style="left:661.50px;top:974px;font-size:13.4px;line-height:17px;color:#333;letter-spacing:0.069px;">Select Payment Method</div>
<svg class="r" style="left:890px;top:980px" width="10" height="6" viewBox="0 0 10 6"><path d="M0.5 0.5 H9.5 L5 5.5 Z" fill="#666"/></svg>
<div class="r" style="left:916px;top:970px;width:193px;height:30px;background:#fff;border:1px solid #c9c9c9;border-radius:4px;box-sizing:border-box;"></div>
<div class="r" style="left:1085px;top:971px;width:23px;height:28px;background:linear-gradient(#fff,#e8e8e8);border-left:1px solid #c9c9c9;border-radius:0 3px 3px 0;"></div>
<svg class="r" style="left:1090px;top:977px" width="13" height="15" viewBox="0 0 13 15"><rect x="0.6" y="1.6" width="12.2" height="13.2" rx="1.6" fill="#2b2b2b"/><rect x="3.4" y="0" width="1.6" height="2.6" fill="#2b2b2b"/><rect x="8.4" y="0" width="1.6" height="2.6" fill="#2b2b2b"/><g fill="#f4f4f4"><rect x="1.8" y="5.8" width="2.2" height="1.4"/><rect x="5.4" y="5.8" width="2.2" height="1.4"/><rect x="9" y="5.8" width="2.2" height="1.4"/><rect x="1.8" y="8.8" width="2.2" height="1.4"/><rect x="5.4" y="8.8" width="2.2" height="1.4"/><rect x="9" y="8.8" width="2.2" height="1.4"/><rect x="1.8" y="11.8" width="2.2" height="1.4"/><rect x="5.4" y="11.8" width="2.2" height="1.4"/><rect x="9" y="11.8" width="2.2" height="1.4"/></g></svg>
<div class="t" style="left:651.40px;top:1012px;font-size:13.6px;line-height:17px;color:#333;letter-spacing:-0.061px;">Payment Reference</div>
<div class="t" style="left:916.70px;top:1012px;font-size:13.6px;line-height:17px;color:#333;letter-spacing:0.266px;">Amount</div>
<div class="r" style="left:973px;top:1011px;width:4px;height:4px;background:#e8001c;border-radius:50%;"></div>
<div class="t" style="left:1180.30px;top:1012px;font-size:13.6px;line-height:17px;color:#333;letter-spacing:-0.041px;">Exch. Rate Multiplier</div>
<div class="r" style="left:1313px;top:1011px;width:4px;height:4px;background:#e8001c;border-radius:50%;"></div>
<div class="r" style="left:652px;top:1035px;width:254px;height:30px;background:#fff;border:1px solid #c9c9c9;border-radius:4px;box-sizing:border-box;"></div>
<div class="r" style="left:916px;top:1035px;width:255px;height:30px;background:#fff;border:1px solid #c9c9c9;border-radius:4px;box-sizing:border-box;"></div>
<div class="r" style="left:1181px;top:1035px;width:188px;height:30px;background:#fff;border:1px solid #c9c9c9;border-radius:4px;box-sizing:border-box;"></div>
<div class="t" style="left:1127.90px;top:1042px;font-size:13.6px;line-height:17px;color:#555;letter-spacing:0.261px;">700.0</div>
<div class="t" style="left:1342.00px;top:1042px;font-size:13.6px;line-height:17px;color:#555;letter-spacing:0.132px;">1.0</div>
<div class="r" style="left:985px;top:1095px;width:116.5px;height:30px;background:#1f6fc6;border:1px solid #185ea9;border-radius:3px;box-sizing:border-box;"></div>
<div class="t" style="left:997.80px;top:1101px;font-size:14.4px;line-height:18px;color:#fff;letter-spacing:0.147px;">Post Payment</div>
<div class="r" style="left:0px;top:1177px;width:1886px;height:1px;background:#fafafa;"></div>
</body></html>
